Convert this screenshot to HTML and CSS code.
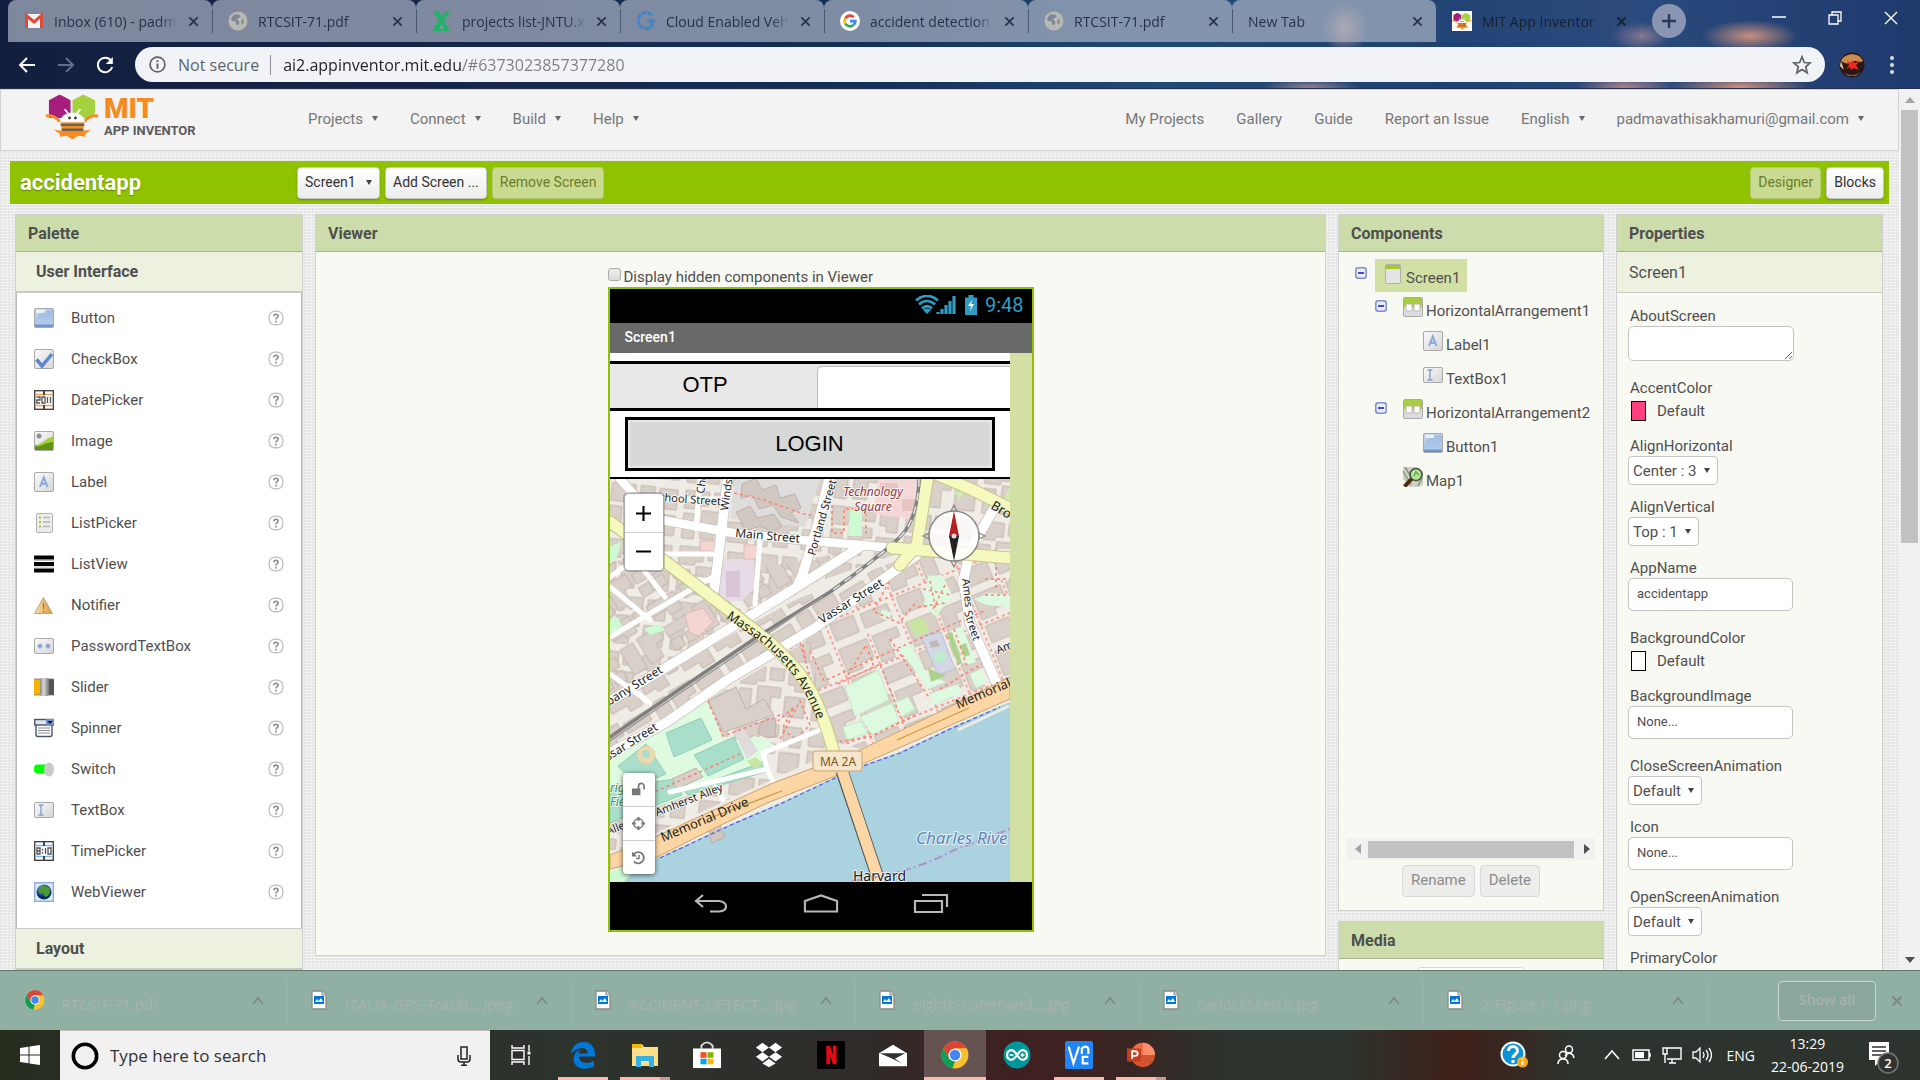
FILE: index.html
```html
<!DOCTYPE html>
<html lang="en">
<head>
<meta charset="utf-8">
<title>MIT App Inventor</title>
<link rel="stylesheet" href="styles.css">
</head>
<body>
<svg class="defs" aria-hidden="true">
  <defs>
    <linearGradient id="blue" x1="0" y1="0" x2="0" y2="1"><stop offset="0" stop-color="#9dbce2"/><stop offset="1" stop-color="#b3cdec"/></linearGradient>
    <linearGradient id="grey" x1="0" y1="0" x2="1" y2="1"><stop offset="0" stop-color="#fafafa"/><stop offset="1" stop-color="#d6d6d6"/></linearGradient>
    <linearGradient id="gold" x1="0" y1="0" x2="1" y2="0"><stop offset="0" stop-color="#fbe3b0"/><stop offset="1" stop-color="#d9963a"/></linearGradient>
    <linearGradient id="steel" x1="0" y1="0" x2="1" y2="0"><stop offset="0" stop-color="#888"/><stop offset=".4" stop-color="#d8d8d8"/><stop offset="1" stop-color="#777"/></linearGradient>
    <radialGradient id="globe" cx=".4" cy=".3"><stop offset="0" stop-color="#7fc4ff"/><stop offset="1" stop-color="#062a66"/></radialGradient>
  </defs>
  <symbol id="i-button" viewBox="0 0 20 20"><rect x=".5" y=".5" width="19" height="19" rx="1.5" fill="url(#blue)" stroke="#a9a9a9"/><path d="M1 16.500h18V19H1z" fill="#7293c8"/><path d="M1 12C3 6 8 3 19 2V1H1z" fill="#fff" opacity=".25"/><rect x="2" y="1.500" width="9" height="3.500" rx="1" fill="#fff" opacity=".7"/></symbol>
  <symbol id="i-check" viewBox="0 0 20 20"><rect x=".5" y=".5" width="19" height="19" rx="1.5" fill="url(#grey)" stroke="#a9a9a9"/><path d="M2.500 10.500 8 17 18 5" fill="none" stroke="#5b86cf" stroke-width="3.500"/></symbol>
  <symbol id="i-date" viewBox="0 0 20 20"><rect x=".7" y=".7" width="18.600" height="18.600" fill="#fff" stroke="#444" stroke-width="1.400"/><path d="M2 4.500h16M2 15.500h16" stroke="#f2a14a" stroke-width="1.300"/><path d="M10 1v4M10 15v4" stroke="#444" stroke-width="2"/><path d="M2.500 7h3.500v3H2.800v3H6M8 7h3v6H8zM13.500 7v6M16.500 7v6" fill="none" stroke="#555" stroke-width="1.300"/></symbol>
  <symbol id="i-image" viewBox="0 0 20 20"><rect x=".5" y=".5" width="19" height="19" rx="1.5" fill="url(#grey)" stroke="#a9a9a9"/><circle cx="5" cy="5" r="2.500" fill="#909090"/><path d="M1 14c8-1 10-6 18-9v14H1z" fill="#a5cf3b"/><path d="M1 15c8 1 10-4 18-4v8H1z" fill="#5f9410"/></symbol>
  <symbol id="i-label" viewBox="0 0 20 20"><rect x=".5" y=".5" width="19" height="19" rx="1.5" fill="url(#grey)" stroke="#a9a9a9"/><path d="M6 15 9.800 5.500 13.600 15M7.300 11.800h5" fill="none" stroke="#86a8dd" stroke-width="2"/></symbol>
  <symbol id="i-listp" viewBox="0 0 20 20"><rect x="2.500" y=".5" width="16" height="19" rx="1.500" fill="#ececea" stroke="#b4b4b4"/><path d="M5 4.500h2M5 9h2M5 13.500h2" stroke="#a4c43c" stroke-width="2.200"/><path d="M9 4.500h7M9 9h7M9 13.500h7" stroke="#b8b8b8" stroke-width="1.500"/></symbol>
  <symbol id="i-listv" viewBox="0 0 20 20"><path d="M0 3.500h20M0 10h20M0 16.500h20" stroke="#000" stroke-width="4"/><path d="M0 6.500h20M0 13h20" stroke="#bbb"/></symbol>
  <symbol id="i-notif" viewBox="0 0 20 20"><path d="M9.500 2.500 18.500 18.500H.5z" fill="url(#gold)" stroke="#b8a58a"/><path d="M9.500 8v6M9.500 15.500v2" stroke="#a77a35" stroke-width="1.200"/></symbol>
  <symbol id="i-pass" viewBox="0 0 20 20"><rect x=".5" y="2.500" width="19" height="15" rx="1.500" fill="url(#grey)" stroke="#a9a9a9"/><path d="M6 7.500v5M3.700 8.700l4.600 2.600M8.300 8.700l-4.600 2.600M14 7.500v5M11.700 8.700l4.600 2.600M16.300 8.700l-4.600 2.600" stroke="#7b9ddc" stroke-width="1.300"/></symbol>
  <symbol id="i-slider" viewBox="0 0 20 20"><path d="M0 2h6v16H0z" fill="#f4b400"/><path d="M14 2h6v16h-6z" fill="#555"/><path d="M0 2h20M0 18h20" stroke="#777" stroke-width=".8"/><rect x="6" y="1" width="9" height="18" rx="2" fill="url(#steel)"/></symbol>
  <symbol id="i-spin" viewBox="0 0 20 20"><rect x="2" y="6" width="16" height="12.500" rx="2" fill="#fff" stroke="#4c5564" stroke-width="1.400"/><rect x=".7" y="1.500" width="18.600" height="5.500" fill="#dfe4ec" stroke="#4c5564" stroke-width="1.400"/><path d="M12 1h8v6.500h-8z" fill="#6f8dd0"/><path d="M13.500 3h5L16 6z" fill="#111"/><path d="M4 10h12M4 12.500h12M4 15h12" stroke="#889" /></symbol>
  <symbol id="i-switch" viewBox="0 0 20 20"><rect y="5.500" width="16" height="9" rx="4" fill="#0f0"/><ellipse cx="15" cy="10.500" rx="5" ry="7" fill="#c9c9c9"/></symbol>
  <symbol id="i-text" viewBox="0 0 20 20"><rect x=".5" y="2.500" width="19" height="15" rx="1.500" fill="url(#grey)" stroke="#a9a9a9"/><path d="M4.500 5h5M4.500 15h5M7 5v10" stroke="#86a0cf" stroke-width="1.400"/></symbol>
  <symbol id="i-time" viewBox="0 0 20 20"><rect x=".7" y=".7" width="18.600" height="18.600" fill="#fff" stroke="#444" stroke-width="1.400"/><path d="M2 4.500h16M2 15.500h16" stroke="#7db7e8" stroke-width="1.300"/><path d="M10 1v4M10 15v4" stroke="#444" stroke-width="2"/><path d="M3 7h3v6H3zM3 10h3M8.500 8v1.500M8.500 11v1.500M11.500 7v6M14 7h3v6h-3z" fill="none" stroke="#555" stroke-width="1.300"/></symbol>
  <symbol id="i-web" viewBox="0 0 20 20"><rect x=".7" y=".7" width="18.600" height="18.600" fill="#dfe9f6" stroke="#8fb0dc" stroke-width="1.400"/><circle cx="10" cy="10" r="7.500" fill="url(#globe)"/><path d="M4 8c2-5 9-5 12-2 1 4 0 7-4 9-3-1-1-4-4-4s-3-1-4-3z" fill="#4a9a34"/></symbol>
  <symbol id="i-help" viewBox="0 0 16 16"><rect x="1.200" y="1.200" width="13.600" height="13.600" rx="5.500" fill="#fff" stroke="#c4c4c4" stroke-width="1.400"/><path d="M5.900 6.200c0-2.700 4.200-2.700 4.200 0 0 1.500-2.100 1.500-2.100 3.200M8 10.700v1.700" fill="none" stroke="#888" stroke-width="1.600"/></symbol>
  <symbol id="i-arr" viewBox="0 0 20 20"><rect x=".5" y=".5" width="19" height="19" rx="1.500" fill="#dcdcdc" stroke="#a9a9a9"/><path d="M1 1h18v9H1z" fill="#a8cc42"/><rect x="3" y="7" width="6" height="7" rx="1" fill="#fff" stroke="#b8b8b8"/><rect x="11" y="7" width="6" height="7" rx="1" fill="#fff" stroke="#b8b8b8"/></symbol>
  <symbol id="i-screen" viewBox="0 0 20 20"><rect x="2.500" y=".5" width="15" height="19" rx="1.500" fill="#e4e4e4" stroke="#b0b0b0"/><path d="M3 1h14v4H3z" fill="#a3c72f"/></symbol>
  <symbol id="i-map" viewBox="0 0 20 20"><path d="M0 0h14l6 6v12l-4 2H6L0 12z" fill="#c9d4c0"/><path d="M0 4 8 18M15 19l4-8M2 0l5 8" stroke="#8c9485" stroke-width="1.500"/><circle cx="13" cy="7.500" r="6" fill="#b7e39b" stroke="#4b4f45" stroke-width="1.700"/><path d="M11 9l2-4 3 3" stroke="#5eb04a" stroke-width="1.600" fill="none"/><path d="M8.500 12 1.500 19.500" stroke="#4d2b0b" stroke-width="4"/></symbol>
  <symbol id="i-minus" viewBox="0 0 12 12"><rect x=".8" y=".8" width="10.400" height="10.400" rx="2.500" fill="#e9ecf8" stroke="#7c8fce" stroke-width="1.500"/><path d="M3 6h6" stroke="#22b" stroke-width="1.600"/></symbol>
  <symbol id="i-chrome" viewBox="0 0 24 24"><circle cx="12" cy="12" r="11.500" fill="#fbc02d"/><path d="M2 6.200A11.500 11.500 0 0 1 22 6.300H12L7 15z" fill="#db4437"/><path d="M2 6.200 7.200 15 12 17.400l-2.100 6A11.500 11.500 0 0 1 2 6.200z" fill="#0f9d58"/><circle cx="12" cy="12" r="5.600" fill="#fff"/><circle cx="12" cy="12" r="4.500" fill="#4285f4"/></symbol>
  <symbol id="i-file" viewBox="0 0 16 20"><path d="M1 1h10l4 4v14H1z" fill="#fff" stroke="#8b8b8b" stroke-width="1.300"/><path d="M11 1v4h4" fill="#ddd" stroke="#8b8b8b"/><path d="M3 6h10v8H3z" fill="#0078d7"/><path d="m4 12 2-3 1.500 2L10 8l2 4z" fill="#fff"/></symbol>
  <symbol id="i-world" viewBox="0 0 20 20"><circle cx="10" cy="10" r="9.500" fill="#b9b9b3"/><path d="M8 3c-3 1-5 4-5 6 2 2 5 0 5 3 0 2 2 3 3 1 1-3-2-4-2-5 2-1 4-2 3-4-1-1-2 1-4-1z" fill="#7d8799"/><path d="M14 8c2 0 2 3 1 5l-2-1z" fill="#7d8799"/></symbol>
  <symbol id="i-x" viewBox="0 0 12 12"><path d="m1.500 1.500 9 9m0-9-9 9" fill="none" stroke="currentColor" stroke-width="1.800"/></symbol>
  <symbol id="i-up" viewBox="0 0 12 12"><path d="m1 9 5-6 5 6" fill="none" stroke="currentColor" stroke-width="1.800"/></symbol>
  <symbol id="i-bee" viewBox="0 0 56 46"><path d="M4 6 15 0l11 6v13l-9 5H4z" fill="#a71d7b"/><path d="M28 6 39 0l12 6v13l-6 5H28z" fill="#a4d23f"/><path d="M1 22c6-1 12 2 14 6M54 22c-6-1-12 2-14 6" stroke="#f68b1f" stroke-width="3" fill="none"/><path d="M16 28h24l-1 8H17z" fill="#f68b1f"/><path d="M18 37h20l9-1-6 4v3l-7-1-6 4-6-4-7 1v-3l-6-4z" fill="#f68b1f"/><path d="M16 31h24M17 36h22" stroke="#6b6152" stroke-width="2.500"/><path d="M16 28c0-12 24-12 24 0z" fill="#fff" stroke="#eee"/><path d="M24 20l-4-5M32 20l4-5" stroke="#fff" stroke-width="1.800"/><circle cx="25" cy="24" r="1.500" fill="#444"/><circle cx="31" cy="24" r="1.500" fill="#444"/></symbol>
</svg>

<header class="browser">
  <div class="tabs">
    <a class="tab" href="#"><svg viewBox="0 0 20 20"><path d="M1 3h18v14H1z" fill="#f4f4f4"/><path d="M2.500 17V4.500L10 11l7.500-6.500V17" fill="none" stroke="#dd4b39" stroke-width="3"/></svg><span>Inbox (610) - padm</span><svg class="x"><use href="#i-x"/></svg></a>
    <a class="tab" href="#"><svg><use href="#i-world"/></svg><span>RTCSIT-71.pdf</span><svg class="x"><use href="#i-x"/></svg></a>
    <a class="tab" href="#"><svg viewBox="0 0 20 20"><path d="M1 0h6l3 6 4-6h4l-6 10 6 10H2v-4l5-6z" fill="#1fb465"/><path d="m10 13-3 5h5z" fill="#8794ab"/></svg><span>projects list-JNTU.x</span><svg class="x"><use href="#i-x"/></svg></a>
    <a class="tab" href="#"><svg viewBox="0 0 20 20"><path d="M16 4A8 8 0 1 0 15 16l2-6h-6" fill="none" stroke="#3d86c6" stroke-width="3" stroke-dasharray="5 1"/></svg><span>Cloud Enabled Veh</span><svg class="x"><use href="#i-x"/></svg></a>
    <a class="tab" href="#"><svg viewBox="0 0 20 20"><circle cx="10" cy="10" r="10" fill="#fff"/><g fill="none" stroke-width="2.600"><path d="M13.800 6.200A5.400 5.400 0 0 0 5.300 7.300" stroke="#ea4335"/><path d="M5.300 7.300a5.400 5.400 0 0 0 0 5.400" stroke="#fbbc05"/><path d="M5.300 12.700a5.400 5.400 0 0 0 8.200 1.400" stroke="#34a853"/><path d="M13.500 14.100a5.400 5.400 0 0 0 1.900-4H10" stroke="#4285f4"/></g></svg><span>accident detection</span><svg class="x"><use href="#i-x"/></svg></a>
    <a class="tab" href="#"><svg><use href="#i-world"/></svg><span>RTCSIT-71.pdf</span><svg class="x"><use href="#i-x"/></svg></a>
    <a class="tab plain" href="#"><span>New Tab</span><svg class="x"><use href="#i-x"/></svg></a>
    <a class="tab on" href="#"><svg viewBox="0 0 56 50"><path d="M0-3h56v56H0z" fill="#fff"/><use href="#i-bee" width="56" height="46" y="2"/></svg><span>MIT App Inventor</span><svg class="x"><use href="#i-x"/></svg></a>
    <button class="newtab" aria-label="New tab"><svg viewBox="0 0 16 16"><path d="M8 1v14M1 8h14" stroke="#2c3950" stroke-width="2.400"/></svg></button>
    <div class="win">
      <svg viewBox="0 0 14 14"><path d="M0 6h14" stroke="#fff" stroke-width="1.500"/></svg>
      <svg viewBox="0 0 14 14"><path d="M1 4h9v9H1zM4 4V1h9v9h-3" fill="none" stroke="#fff" stroke-width="1.300"/></svg>
      <svg viewBox="0 0 14 14"><path d="m1 1 12 12M13 1 1 13" stroke="#fff" stroke-width="1.400"/></svg>
    </div>
  </div>
  <div class="toolbar">
    <button aria-label="Back"><svg viewBox="0 0 18 18"><path d="M17 9H2m7-7L2 9l7 7" fill="none" stroke="#fff" stroke-width="2"/></svg></button>
    <button aria-label="Forward"><svg viewBox="0 0 18 18"><path d="M1 9h15M9 2l7 7-7 7" fill="none" stroke="#62708f" stroke-width="2"/></svg></button>
    <button aria-label="Reload"><svg viewBox="0 0 18 18"><path d="M15 4.500A7.300 7.300 0 1 0 16.200 11" fill="none" stroke="#fff" stroke-width="2"/><path d="M16.800 1v7h-7z" fill="#fff"/></svg></button>
    <div class="url">
      <svg viewBox="0 0 16 16"><circle cx="8" cy="8" r="7" fill="none" stroke="#5f6368" stroke-width="1.600"/><path d="M8 7v5M8 4v1.700" stroke="#5f6368" stroke-width="1.800"/></svg>
      <label for="addr">Not secure</label>
      <input id="addr" type="text" value="ai2.appinventor.mit.edu/#6373023857377280">
      <svg viewBox="0 0 20 20" class="star"><path d="m10 1.800 2.300 5.700 6 .4-4.600 3.900 1.500 6L10 14.500l-5.200 3.300 1.500-6L1.700 7.900l6-.4z" fill="none" stroke="#5f6368" stroke-width="1.700"/></svg>
    </div>
    <svg class="avatar" viewBox="0 0 26 26"><circle cx="13" cy="13" r="12.500" fill="#2a1613"/><path d="M2 9C5 1 20-1 24 9c-4 3-6-2-11 1-4 2-7 2-11-1z" fill="#c98a4c"/><path d="M2 9l3 9-4-4z" fill="#e0cba8"/><path d="m8 9 4 2 1-3 3 3 5-2-4 4 3 5-5-2-3 2-1-3-4 2 3-4z" fill="#f0281c"/><path d="M5 20c5 4 11 4 16 0l-4 4h-8z" fill="#6f5a4c"/></svg>
    <svg class="dots" viewBox="0 0 4 18"><g fill="#ddd"><circle cx="2" cy="2" r="2"/><circle cx="2" cy="9" r="2"/><circle cx="2" cy="16" r="2"/></g></svg>
  </div>
</header>

<div class="page">
  <div class="app">
    <header class="top">
      <a class="logo" href="#"><svg viewBox="0 0 56 46"><use href="#i-bee"/></svg><span class="words"><b>MIT</b><span>APP INVENTOR</span></span></a>
      <nav class="menu"><a class="drop" href="#">Projects</a><a class="drop" href="#">Connect</a><a class="drop" href="#">Build</a><a class="drop" href="#">Help</a></nav>
      <nav class="menu end"><a href="#">My Projects</a><a href="#">Gallery</a><a href="#">Guide</a><a href="#">Report an Issue</a><a class="drop" href="#">English</a><a class="drop" href="#">padmavathisakhamuri@gmail.com</a></nav>
    </header>

    <div class="bar">
      <h1>accidentapp</h1>
      <span class="pick"><select aria-label="Screen"><option>Screen1</option></select></span>
      <button>Add Screen ...</button>
      <button class="dim" disabled>Remove Screen</button>
      <button class="dim right" disabled>Designer</button>
      <button>Blocks</button>
    </div>

    <main class="cols">
      <section class="panel palette">
        <h2>Palette</h2>
        <h3>User Interface</h3>
        <ul>
          <li><svg><use href="#i-button"/></svg><span>Button</span><svg class="help"><use href="#i-help"/></svg></li>
          <li><svg><use href="#i-check"/></svg><span>CheckBox</span><svg class="help"><use href="#i-help"/></svg></li>
          <li><svg><use href="#i-date"/></svg><span>DatePicker</span><svg class="help"><use href="#i-help"/></svg></li>
          <li><svg><use href="#i-image"/></svg><span>Image</span><svg class="help"><use href="#i-help"/></svg></li>
          <li><svg><use href="#i-label"/></svg><span>Label</span><svg class="help"><use href="#i-help"/></svg></li>
          <li><svg><use href="#i-listp"/></svg><span>ListPicker</span><svg class="help"><use href="#i-help"/></svg></li>
          <li><svg><use href="#i-listv"/></svg><span>ListView</span><svg class="help"><use href="#i-help"/></svg></li>
          <li><svg><use href="#i-notif"/></svg><span>Notifier</span><svg class="help"><use href="#i-help"/></svg></li>
          <li><svg><use href="#i-pass"/></svg><span>PasswordTextBox</span><svg class="help"><use href="#i-help"/></svg></li>
          <li><svg><use href="#i-slider"/></svg><span>Slider</span><svg class="help"><use href="#i-help"/></svg></li>
          <li><svg><use href="#i-spin"/></svg><span>Spinner</span><svg class="help"><use href="#i-help"/></svg></li>
          <li><svg><use href="#i-switch"/></svg><span>Switch</span><svg class="help"><use href="#i-help"/></svg></li>
          <li><svg><use href="#i-text"/></svg><span>TextBox</span><svg class="help"><use href="#i-help"/></svg></li>
          <li><svg><use href="#i-time"/></svg><span>TimePicker</span><svg class="help"><use href="#i-help"/></svg></li>
          <li><svg><use href="#i-web"/></svg><span>WebViewer</span><svg class="help"><use href="#i-help"/></svg></li>
        </ul>
        <h3>Layout</h3>
      </section>

      <section class="panel viewer">
        <h2>Viewer</h2>
        <div class="stage">
          <label class="hid"><input type="checkbox">Display hidden components in Viewer</label>
          <div class="phone">
            <div class="status">
              <svg class="wifi" viewBox="0 0 42 20"><g fill="none" stroke="#2f9cc4" stroke-width="2.800"><path d="M1 5.500c7-6 15-6 22 0M4 9.500c5-4.500 11-4.500 16 0M7 13.500c3-3 7-3 10 0"/></g><path d="m12 19-4-4c2-2 6-2 8 0z" fill="#2f9cc4"/><path d="M23 19v-2M27 19v-5M31 19v-9M35 19V6M39 19V1" stroke="#2f9cc4" stroke-width="3.200"/></svg>
              <svg class="batt" viewBox="0 0 14 20"><path d="M1 2.500h3.500V0h5v2.500H13V20H1z" fill="#2f9cc4"/><path d="m8 5-4 6h3l-1 5 4-7H7z" fill="#fff"/></svg>
              <span>9:48</span>
            </div>
            <div class="title">Screen1</div>
            <div class="body">
              <div class="canvas">
                <div class="otp"><label for="otp">OTP</label><input id="otp" type="text"></div>
                <div class="login"><button>LOGIN</button></div>
                <div class="map">
                  <svg class="tiles" viewBox="0 0 400 403" preserveAspectRatio="xMinYMin slice">
                    <defs>
                      <pattern id="blk" width="84" height="62" patternUnits="userSpaceOnUse" patternTransform="rotate(-31)"><path d="M3 3h26v18H16v-4H3zM33 3h12v9H33zM49 4h31v20H66v-7H49zM4 28h15v29H4zM24 27h24v14h-9v15H24zM53 31h27v11H53zM52 46h12v11H52zM68 46h12v11H68z" fill="#d9d0c9" stroke="#c3b7ad"/></pattern>
                      <pattern id="blk2" width="74" height="56" patternUnits="userSpaceOnUse" patternTransform="rotate(6)"><path d="M3 3h24v14h-8v4H3zM32 3h14v12H32zM51 4h18v20H58v-6h-7zM3 26h12v25H3zM21 22h23v10h-9v18H21zM49 30h20v20H49z" fill="#d9d0c9" stroke="#c3b7ad"/></pattern>
                      <pattern id="blk3" width="72" height="60" patternUnits="userSpaceOnUse" patternTransform="rotate(-22)"><path d="M4 4h30v20H20v6H4zM40 4h26v10H54v18H40zM5 37h25v18H5zM37 39h29v15H37z" fill="#d9d0c9" stroke="#c3b7ad"/><path d="M1 0v60M0 34h72M37 0v34" stroke="#fa8072" stroke-width="1.300" stroke-dasharray="3 3" fill="none"/></pattern>
                      <path id="mass" d="M116 139 150 162Q190 194 206 238L212 258"/>
                    </defs>
                    <path d="M0 0h400v403H0z" fill="#efebe5"/>
                    <path d="M0 0h330v60L187 110 0 222z" fill="url(#blk2)"/>
                    <path d="M0 80 105 98 250 70 187 112 0 230zM0 222 187 120 307 74 203 152 0 270z" fill="url(#blk)"/>
                    <path d="M307 74 400 79V200L250 270 215 260 195 160z" fill="url(#blk3)"/>
                    <path d="M330 0h70v70h-90zM0 280 200 160 218 275 0 375z" fill="url(#blk2)"/>
                    <path d="M125 0h85l-15 48-75-8z" fill="#dfdddb"/>
                    <path d="m132 5 14-6 6 12 14-5 4 13 15-4 6 14-10 5 8 10-18-6-8-12-14 4-6-14-12 3zM126 33l14-6 8 12 16-4 8 12-8 6-14-6-14 5z" fill="#d1c8c1" stroke="#bcb3ac"/>
                    <path d="M268 0h43l-12 40-35-5z" fill="#f4d8d8"/><path d="M270 4h18v10h-18zM292 20h14v12h-14z" fill="#e6c5c4"/>
                    <path d="M109 80h35v30l-12 12h-22z" fill="#e8dbe8"/><path d="M116 92h14v26h-14z" fill="#d8c6d6"/>
                    <path d="M90 62h20v10H90zM134 66h14v14h-14zM75 135l18-6 10 14-14 14-10-4z" fill="#f4d5d2" stroke="#deb8b5"/>
                    <path d="M240 31h12v26h-14zM0 68l12-6-6 18-6 5zM0 142l8-4 4 10-12 8zM34 150l14-5 8 6-16 5z" fill="#cdfad2"/>
                    <path d="m390 28 10-20v30zM302 56l6-6-4 14zM345 13l9 0-5 8z" fill="#cdeeb0"/>
                    <path d="m318 97 14-1 10 20-16 22-12-12zM364 120l16-6 20 2v12l-24-2zM272 130l10 4-4 8-8-4z" fill="#ddfae0"/>
                    <path d="M298 143l14-5 8 14-14 6z" fill="#c8e6a0"/>
                    <path d="m311 158 20-5 14 37-17 6z" fill="#d3d6e5" stroke="#bbbfd3"/><circle cx="330" cy="178" r="6" fill="#bfeccc"/><path d="m319 163 8-2 3 6-9 2z" fill="#c1b9b4"/>
                    <path d="m288 168 12-5 16 32 20 8-18 7zM340 152l12-5 14 36-10 3z" fill="#ddfae0"/><path d="m337 155 5-2 10 31-4 2zM350 166l6-2 4 12-6 2zM318 189l18 8-15 6z" fill="#aed18d"/>
                    <path d="m360 195 11-5 6 14-11 5zM320 215l28-10 4 8-30 14z" fill="#ddfae0"/>
                    <path d="m235 208 33-17 11 30-34 16zM250 238l32-14 7 18-27 14zM284 224l14-6 7 12-14 8zM233 248l18-6 6 12-20 7z" fill="#ddfae0" stroke="#c6e8c8"/>
                    <path d="m97 223 15 34 21 6 12-6 12 4 12 9-14 4-9 20-72 24-74 26v-74l42-15 35-25z" fill="#defbe1"/>
                    <path d="m56 254 35-15 11 22-38 17zM84 276l40-18 10 22-36 17zM8 287l28-22 20 30-30 12zM74 312l82-30 2 10-80 24zM0 310l64-10 8 16-72 28z" fill="#a9dfca" stroke="#93cdb5"/>
                    <circle cx="36" cy="276" r="9" fill="#ecd9b0" stroke="#dbc18c" stroke-dasharray="2 2"/><circle cx="36" cy="275" r="4" fill="#a9dfca"/>
                    <path d="m62 300 24-11 7 9-26 12zM98 222l28-14 10 22 18-10 10 16-50 17z" fill="#d9d0c9" stroke="#c0b4aa"/>
                    <path d="m124 254 10-4 14 22-11 8z" fill="#dedcdc"/><path d="M148 254q2-18 18-14l-1 18q-10 2-17-4z" fill="#d1c6bf" stroke="#bcb0a8"/>
                    <path d="m137 282 8-4 8 6-8 6z" fill="#c8e6a0"/>
                    <g fill="none" stroke="#fa8072" stroke-width="1.500" stroke-dasharray="3 3">
                      <path d="M124 14l30 7 40 14 12 2M222 26v28h12V30h22v28M98 222l15 35 60-22M170 260l20-38 10 24-14 14-14-10 12-22-16 14M190 164l30 100 40-6 46-22M228 205l42-20 30 78M200 172l14 30 90-40 70-30M280 160l40 60M285 92l-22 40 26 12 18-22M320 102l6 30M335 106l-12 24M313 110l28 6M308 128l28-4M344 150l14 40M238 196l18-30 8 22M180 170l12-8 4 20M375 100h25M375 116h25M386 70v40M40 315l90-40M330 210l50-30"/>
                    </g>
                    <g fill="none" stroke="#c9c3bd" stroke-linecap="round">
                      <path d="M10 0 46 40 123 54 190 61 250 66 282 69" stroke-width="10"/><path d="M118-4 112 48 104 112M220-4 207 48 193 94 187 108M0 222 80 174 187 108 250 68M0 274 57 243 117 201 203 150 307 76M353 100 360 144 386 203M353 104 360 71 385 28" stroke-width="11"/>
                    </g>
                    <g fill="none" stroke="#fff" stroke-linecap="round">
                      <path d="M10 0 46 40 123 54 190 61 250 66 282 69" stroke-width="8.500"/>
                      <path d="M118-4 112 48 104 112M220-4 207 48 193 94 187 108M0 222 80 174 187 108 250 68M0 274 57 243 117 201 203 150 307 76M353 100 360 144 386 203M353 104 360 71 385 28" stroke-width="9.500"/>
                      <path d="M150 61l-5 64M0 158l80-47 25-14M0 108l40 33M80 100l25 2M0 195l40 29M0 98l25-18 30 38M60 313l97-23-4-16 57-23M157 290l6 12M105 308l8 12M52 20h60M90 0l-4 50M55 75h50" stroke-width="5"/>
                    </g>
                    <g fill="none" stroke-linecap="round">
                      <path d="M0 43 57 84 120 132 157 161Q190 190 203 216T225 278M282 69l28 2 90 8M318-4 307 66 290 86M328-4 363 11l40 20" stroke="#c5c48a" stroke-width="13"/>
                      <path d="M309 0Q308 40 290 58T220 113L150 156 73 208 0 258" stroke="#808080" stroke-width="3.500"/>
                      <path d="M309 0Q308 40 290 58T220 113" stroke="#e8e8e8" stroke-width="1.500" stroke-dasharray="7 7"/>
                      <path d="M212 118l-62 42-77 52L0 262" stroke="#999" stroke-width="1.500"/>
                      <path d="M0 43 57 84 120 132 157 161Q190 190 203 216T225 278M282 69l28 2 90 8M318-4 307 66 290 86M328-4 363 11l40 20" stroke="#f6f9be" stroke-width="11"/>
                    </g>
                    <path d="m0 396 50-18 73-34 47-20 53-25 30-13 37-13 50-24 60-26v180H0z" fill="#abd3df"/>
                    <path d="M0 403v-10l12-4 10 6-8 8z" fill="#cdfad2"/><path d="m98 350 12-4 5 12-13 6z" fill="#d1c6c0" stroke="#bcb0aa"/><path d="m348 251 51-24" stroke="#efebe5" stroke-width="3"/>
                    <path d="m0 376 47-19 116-53 40-15 47-18 73-35 77-38v22l-77 34-66 29-34 15-66 26-50 24-60 30-47 12z" fill="#fcd6a4" stroke="#c9a26d"/>
                    <path d="m100 339 72-27M287 261l72-32" stroke="#c89b45" stroke-width="1.200"/>
                    <path d="m50 379 73-34 47-20 53-25 30-13 37-13 50-24 50-22" fill="none" stroke="#5555e0" stroke-width="1.200" stroke-dasharray="4 3"/>
                    <path d="m232 292 38 113" stroke="#555" stroke-width="13"/><path d="m231 288 39 117" stroke="#fcd6a4" stroke-width="11"/>
                    <path d="M242 402q60-8 100-30l58-22" fill="none" stroke="#b091cc" stroke-width="2" stroke-dasharray="9 3 2 3"/>
                    <rect x="203" y="272" width="49" height="20" rx="3" fill="#f7e5cb" stroke="#d8b98c" stroke-width="1.500"/>
                    <g class="names">
                      <text x="228" y="287" text-anchor="middle" class="shield">MA 2A</text>
                      <text transform="translate(49 22) rotate(4)">chool Street</text>
                      <text transform="translate(118 32) rotate(-82)">Winds</text>
                      <text transform="translate(94 15) rotate(-82)">Che</text>
                      <text transform="translate(125 58) rotate(5)" class="main">Main Street</text>
                      <text transform="translate(205 77) rotate(-74)">Portland Street</text>
                      <text transform="translate(212 145) rotate(-32)" class="main">Vassar Street</text>
                      <text transform="translate(352 100) rotate(83)">Ames</text>
                      <text transform="translate(354 133) rotate(72)">Street</text>
                      <text transform="translate(380 29) rotate(31)" class="big">Bro</text>
                      <text transform="translate(388 175) rotate(-22)">Am</text>
                      <text transform="translate(-1 227) rotate(-32)" class="main">bany Street</text>
                      <text transform="translate(-2 282) rotate(-32)" class="main">ssar Street</text>
                      <text transform="translate(47 337) rotate(-21)">Amherst Alley</text>
                      <text transform="translate(-2 356) rotate(-21)">Alley</text>
                      <text transform="translate(53 363) rotate(-23)" class="big">Memorial Drive</text>
                      <text transform="translate(348 230) rotate(-23)" class="big">Memorial</text>
                      <text class="big"><textPath href="#mass">Massachusetts Avenue</textPath></text>
                      <text x="263" y="17" text-anchor="middle" class="tech">Technology</text>
                      <text x="263" y="32" text-anchor="middle" class="tech">Square</text>
                      <text x="0" y="313" class="field">rig</text><text x="0" y="327" class="field">Fie</text>
                      <text x="306" y="365" class="river">Charles Rive</text>
                      <text x="243" y="402" class="harvard">Harvard</text>
                    </g>
                  </svg>
                  <div class="zoom"><button aria-label="Zoom in"><svg viewBox="0 0 18 18"><path d="M9 1v16M1 9h16" stroke="#000" stroke-width="2.200"/></svg></button><button aria-label="Zoom out"><svg viewBox="0 0 18 18"><path d="M1 9h16" stroke="#000" stroke-width="2.200"/></svg></button></div>
                  <svg class="compass" viewBox="0 0 66 66"><g fill="none" stroke="#888" stroke-width="1.200"><path d="m33 2 3 6h-6zM33 64l3-6h-6zM2 33l6 3v-6zM64 33l-6 3v-6z"/></g><circle cx="33" cy="33" r="25" fill="#fff" fill-opacity=".85" stroke="#888" stroke-width="1.500"/><path d="M33 8l5 25H28z" fill="#b52222"/><path d="M33 58l5-25H28z" fill="#222"/><circle cx="33" cy="33" r="2.500" fill="#ddd"/></svg>
                  <div class="tools">
                    <button aria-label="Lock"><svg viewBox="0 0 16 16"><path d="M1 7h9v7H1z" fill="#777"/><path d="M8 8V4.500a3 3 0 0 1 6 0V8" fill="none" stroke="#777" stroke-width="1.800"/></svg></button>
                    <button aria-label="Center"><svg viewBox="0 0 16 16"><circle cx="8" cy="8" r="5" fill="none" stroke="#777" stroke-width="1.600"/><path d="M8 1v4M8 11v4M1 8h4M11 8h4" stroke="#777" stroke-width="2.200"/></svg></button>
                    <button aria-label="Reset"><svg viewBox="0 0 16 16"><path d="M3 4.500a6 6 0 1 1 0 7.500" fill="none" stroke="#777" stroke-width="2"/><path d="M1 1.500V7h5.500z" fill="#777"/><path d="M8.500 5v4H5.500" fill="none" stroke="#777" stroke-width="1.500"/></svg></button>
                  </div>
                </div>
              </div>
            </div>
            <div class="keys">
              <svg viewBox="0 0 34 20"><path d="M9 2 2 8l7 6M2 8h23q7 1 7 5.500t-7 5H16" fill="none" stroke="#b8b8b8" stroke-width="2.200"/></svg>
              <svg viewBox="0 0 38 20"><path d="M2 19V8l17-6 17 6v11z" fill="none" stroke="#b8b8b8" stroke-width="2.200"/></svg>
              <svg viewBox="0 0 36 20"><path d="M2 8h27v11H2zM9 2h25v12" fill="none" stroke="#b8b8b8" stroke-width="2.200"/></svg>
            </div>
          </div>
        </div>
      </section>

      <div class="mid">
        <section class="panel comps">
          <h2>Components</h2>
          <ul class="tree">
            <li class="l0"><svg class="m"><use href="#i-minus"/></svg><span class="sel"><svg><use href="#i-screen"/></svg>Screen1</span></li>
            <li class="l1"><svg class="m"><use href="#i-minus"/></svg><span><svg><use href="#i-arr"/></svg>HorizontalArrangement1</span></li>
            <li class="l3"><span><svg><use href="#i-label"/></svg>Label1</span></li>
            <li class="l3"><span><svg><use href="#i-text"/></svg>TextBox1</span></li>
            <li class="l1"><svg class="m"><use href="#i-minus"/></svg><span><svg><use href="#i-arr"/></svg>HorizontalArrangement2</span></li>
            <li class="l3"><span><svg><use href="#i-button"/></svg>Button1</span></li>
            <li class="l2"><span><svg><use href="#i-map"/></svg>Map1</span></li>
          </ul>
          <div class="hbar"><i class="tri left"></i><i class="thumb"></i><i class="tri rightw"></i></div>
          <div class="acts"><button disabled>Rename</button><button disabled>Delete</button></div>
        </section>
        <section class="panel media">
          <h2>Media</h2>
          <div class="acts"><button>Upload File ...</button></div>
        </section>
      </div>

      <section class="panel props">
        <h2>Properties</h2>
        <p class="who">Screen1</p>
        <form>
          <div class="f"><label for="p1">AboutScreen</label><textarea id="p1"></textarea></div>
          <div class="f color"><span>AccentColor</span><button type="button"><i class="pink"></i>Default</button></div>
          <div class="f s"><label for="p2">AlignHorizontal</label><span class="pick"><select id="p2"><option>Center : 3</option></select></span></div>
          <div class="f s"><label for="p3">AlignVertical</label><span class="pick"><select id="p3"><option>Top : 1</option></select></span></div>
          <div class="f"><label for="p4">AppName</label><input id="p4" type="text" value="accidentapp"></div>
          <div class="f color"><span>BackgroundColor</span><button type="button"><i></i>Default</button></div>
          <div class="f"><label for="p5">BackgroundImage</label><input id="p5" type="text" value="None..."></div>
          <div class="f s"><label for="p6">CloseScreenAnimation</label><span class="pick"><select id="p6"><option>Default</option></select></span></div>
          <div class="f"><label for="p7">Icon</label><input id="p7" type="text" value="None..."></div>
          <div class="f s"><label for="p8">OpenScreenAnimation</label><span class="pick"><select id="p8"><option>Default</option></select></span></div>
          <div class="f color"><span>PrimaryColor</span></div>
        </form>
      </section>
    </main>
  </div>
  <div class="vbar"><i class="tri up"></i><i class="thumb"></i><i class="tri down"></i></div>
</div>

<div class="downloads">
  <div class="dl"><svg class="ch"><use href="#i-chrome"/></svg><span>RTCSIT-71.pdf</span><svg class="up"><use href="#i-up"/></svg></div>
  <div class="dl"><svg><use href="#i-file"/></svg><span>ITALIA-GPS-Tracki....jpeg</span><svg class="up"><use href="#i-up"/></svg></div>
  <div class="dl"><svg><use href="#i-file"/></svg><span>ACCIDENT-DETECT....jpg</span><svg class="up"><use href="#i-up"/></svg></div>
  <div class="dl"><svg><use href="#i-file"/></svg><span>eighth-command....jpg</span><svg class="up"><use href="#i-up"/></svg></div>
  <div class="dl"><svg><use href="#i-file"/></svg><span>carlockSketch.jpg</span><svg class="up"><use href="#i-up"/></svg></div>
  <div class="dl"><svg><use href="#i-file"/></svg><span>2-Figure1-1.png</span><svg class="up"><use href="#i-up"/></svg></div>
  <button class="all">Show all</button>
  <button class="shut" aria-label="Close"><svg><use href="#i-x"/></svg></button>
</div>

<footer class="task">
  <button class="start" aria-label="Start"><svg viewBox="0 0 20 20"><path d="M0 3 8.500 1.700v7.800H0zM9.500 1.500 20 0v9.500H9.500zM0 10.500h8.500v7.800L0 17zM9.500 10.500H20V20L9.500 18.500z" fill="#fff"/></svg></button>
  <div class="search">
    <svg class="ring" viewBox="0 0 28 28"><circle cx="14" cy="14" r="11.700" fill="none" stroke="#000" stroke-width="3.600"/></svg>
    <input type="text" aria-label="Search" placeholder="Type here to search">
    <svg class="mic" viewBox="0 0 14 20"><rect x="4" y="1" width="6" height="12" fill="none" stroke="#222" stroke-width="1.500"/><path d="M1 9v4q0 3 3 3h6q3 0 3-3V9M7 16v3M4 19.200h6" fill="none" stroke="#222" stroke-width="1.500"/></svg>
  </div>
  <nav class="apps">
    <a href="#" aria-label="Task view"><svg class="sm" viewBox="0 0 20 20"><path d="M1 5.500h12v9H1zM1 0v3h12V0M1 20v-3h12v3M18 0v6M18 11v9" fill="none" stroke="#fff" stroke-width="1.400"/><path d="M16.500 6.500h3v3h-3z" fill="#fff"/></svg></a>
    <a href="#" class="run" aria-label="Edge"><svg viewBox="0 0 28 28"><path d="M2 13C3 4 9 1 14.500 1 23 1 26.500 7.500 26 15.500H10c0 7 8.500 8 15 4.500V25.500C16 30 4 27.500 4.500 17 5 12 9 9 12 8c-2 1.500-2.500 3-2.500 4.500h9C19 5 8 5 2 13z" fill="#0078d7"/></svg></a>
    <a href="#" class="run multi" aria-label="Explorer"><svg viewBox="0 0 28 28"><path d="M1 3h10l2 3h14v19H1z" fill="#fce18a"/><path d="M1 3h10v4H1z" fill="#f5b700"/><path d="M5 15h18v11h-5v-6h-8v6H5z" fill="#37b0e8"/></svg></a>
    <a href="#" aria-label="Store"><svg viewBox="0 0 30 30"><path d="M0 8h30v21H0z" fill="#fff"/><path d="M9 9V5q6-7 12 0v4" fill="none" stroke="#ddd" stroke-width="2"/><path d="M8 12h6.500v6H8z" fill="#f25022"/><path d="M15.500 12H22v6h-6.500z" fill="#7fba00"/><path d="M8 19h6.500v6H8z" fill="#00a4ef"/><path d="M15.500 19H22v6h-6.500z" fill="#ffb900"/></svg></a>
    <a href="#" aria-label="Dropbox"><svg viewBox="0 0 30 28"><path d="m8 1 7 5-7 5-7-5zM22 1l7 5-7 5-7-5zM8 11l7 5-7 5-7-5zM22 11l7 5-7 5-7-5zM15 18l7 5-7 4-7-4z" fill="#fff"/></svg></a>
    <a href="#" aria-label="Netflix"><svg viewBox="0 0 30 30"><path d="M0 0h30v30H0z"/><path d="M10 5h4l3 10V5h4v20h-4l-3-9v9h-4z" fill="#e50914"/></svg></a>
    <a href="#" aria-label="Mail"><svg viewBox="0 0 30 28"><path d="M0 12 15 3l15 9v14H0z" fill="#fff"/><path d="M1 12h27L17 18l8 5-13-6z" fill="#2d332d"/></svg></a>
    <a href="#" class="run cur" aria-label="Chrome"><svg><use href="#i-chrome"/></svg></a>
    <a href="#" aria-label="Arduino"><svg viewBox="0 0 28 28"><circle cx="14" cy="14" r="13.500" fill="#00979c"/><path d="M14 14c-6-9-10-3-10 0s4 9 10 0 10-3 10 0-4 9-10 0z" fill="none" stroke="#fff" stroke-width="2.200"/><path d="M6.500 14h4M17.500 14h4M19.500 12v4" stroke="#fff" stroke-width="1.300"/></svg></a>
    <a href="#" class="run" aria-label="VNC"><svg viewBox="0 0 30 30"><rect width="30" height="30" rx="2" fill="#2185f4"/><path d="m4 6 5 18 6-18M18 14V8q4-4 7 0v6M25 17h-6v7h6" fill="none" stroke="#fff" stroke-width="2.300"/></svg></a>
    <a href="#" class="run multi" aria-label="PowerPoint"><svg viewBox="0 0 30 28"><circle cx="17" cy="14" r="13" fill="#d35230"/><path d="M17 1a13 13 0 0 1 13 13H17z" fill="#ff8f6b"/><path d="M17 1v13H4A13 13 0 0 1 17 1z" fill="#ed6c47"/><path d="M0 7h15v14H0z" fill="#c43e1c"/><path d="M5.500 18v-8h3q3 0 3 2.500T8.500 15h-3" fill="none" stroke="#fff" stroke-width="2"/></svg></a>
  </nav>
  <div class="tray">
    <svg class="w28" viewBox="0 0 28 28"><circle cx="13" cy="13" r="12.500" fill="#fff"/><circle cx="13" cy="13" r="10.500" fill="#0a93d6"/><path d="M8.500 10c0-6 9-6 9 0 0 3.500-4.500 3.500-4.500 7M13 19v3" fill="none" stroke="#fff" stroke-width="3"/><circle cx="22.500" cy="21" r="5.500" fill="#f7a81b"/><path d="M22.500 20v4M22.500 17.500v1.500" stroke="#fff" stroke-width="1.800"/></svg>
    <svg class="w20" viewBox="0 0 20 20"><g fill="none" stroke="#fff" stroke-width="1.500"><circle cx="13" cy="4.500" r="3.500"/><path d="M9 11q4-5 8-1l1 3"/><circle cx="7" cy="10" r="3.500"/><path d="M2 19q0-5 5-5t5 5"/></g></svg>
    <svg class="w16" viewBox="0 0 16 16"><path d="m1 12 7-8 7 8" fill="none" stroke="#fff" stroke-width="1.500"/></svg>
    <svg class="w20" viewBox="0 0 20 20"><path d="M1 5h16v10H1zM18 8v4" fill="none" stroke="#fff" stroke-width="1.500"/><path d="M3 7h9v6H3z" fill="#fff"/></svg>
    <svg class="w20" viewBox="0 0 20 20"><path d="M5 3h14v11H5M10 14v4M7 18h7" fill="none" stroke="#fff" stroke-width="1.400"/><path d="M1 3h4v6H1zM3 9v9" fill="none" stroke="#fff" stroke-width="1.400"/></svg>
    <svg class="w20" viewBox="0 0 20 20"><path d="M1 7h3l4-4v14l-4-4H1zM11 7q2 3 0 6M14 5q4 5 0 10M17 3q5 7 0 14" fill="none" stroke="#fff" stroke-width="1.300"/></svg>
    <span class="lang">ENG</span>
    <time>13:29<br>22-06-2019</time>
    <svg class="note" viewBox="0 0 32 34"><path d="M1 1h20v18h-8l-6 6v-6H1z" fill="#fff"/><path d="M4 6h14M4 10h14M4 14h10" stroke="#2d332d" stroke-width="1.300"/><circle cx="20" cy="22" r="10" fill="#30332f" stroke="#777" stroke-width="1.500"/><text x="20" y="27" text-anchor="middle">2</text></svg>
  </div>
</footer>
</body>
</html>
```
FILE: styles.css
```css
* { box-sizing: border-box; }
body { margin: 0; height: 100vh; display: flex; flex-direction: column; overflow: hidden; font-family: Roboto, "Liberation Sans", sans-serif; font-size: 15px; color: #4f4f4f; }
button, input, select, textarea { font: inherit; color: inherit; }
button { cursor: pointer; padding: 0; }
a { color: inherit; text-decoration: none; }
ul { list-style: none; margin: 0; padding: 0; }
h1, h2, h3, p { margin: 0; }
svg { display: block; flex: none; }
.defs { position: absolute; width: 0; height: 0; }

/* browser chrome */
.browser { flex: none; height: 89px; font-family: "Open Sans", sans-serif; border-bottom: 1px solid #26304a;
  background:
    radial-gradient(48px 16px at 1750px 36px, #c98f7e 0, transparent 100%),
    radial-gradient(30px 14px at 1640px 36px, #8d7a92 0, transparent 100%),
    radial-gradient(70px 12px at 1740px 87px, #cf8f7c 0, transparent 100%),
    radial-gradient(50px 12px at 1625px 87px, #a9808a 0, transparent 100%),
    radial-gradient(50px 8px at 1310px 87px, #8f7f90 0, transparent 100%),
    radial-gradient(24px 26px at 1345px 28px, #a98d94 0, transparent 100%),
    linear-gradient(90deg, #131f3f 0, #16244a 22%, #123059 45%, #1f4a78 60%, #1d4173 75%, #294a7c 86%, #1f396d 100%); }
.tabs { display: flex; height: 42px; padding-left: 8px; }
.tab { position: relative; flex: 0 1 204px; min-width: 0; display: flex; align-items: center; gap: 10px; padding: 0 13px 0 16px; background: rgba(172, 181, 196, .7); border-radius: 8px 8px 0 0; color: #26324a; font-size: 14px; }
.tab + .tab:not(.on)::before { content: ""; position: absolute; left: 0; top: 9px; width: 1px; height: 24px; background: #4b5872; }
.tab svg { width: 20px; height: 20px; }
.tab svg.x { width: 11px; height: 11px; }
.tab span { flex: 1; overflow: hidden; white-space: nowrap; -webkit-mask-image: linear-gradient(90deg, #000 85%, transparent); mask-image: linear-gradient(90deg, #000 85%, transparent); }
.tab.on { background: rgba(60, 80, 130, .2); color: #16202f; }
.newtab { align-self: center; width: 34px; height: 34px; margin-left: 12px; border: 0; border-radius: 50%; background: #8995b3; display: grid; place-items: center; }
.newtab svg { width: 16px; height: 16px; }
.win { margin-left: auto; display: flex; gap: 42px; align-items: center; padding-right: 22px; height: 36px; }
.win svg { width: 14px; height: 14px; }
.toolbar { display: flex; align-items: center; height: 45px; padding: 0 26px 0 18px; }
.toolbar button { width: 18px; height: 18px; margin-right: 21px; border: 0; background: none; }
.toolbar button svg { width: 18px; height: 18px; }
.url { flex: 1; height: 35px; margin-right: 14px; padding: 0 13px 0 14px; display: flex; align-items: center; gap: 12px; background: #f1f3f6; border-radius: 18px; font-size: 16px; color: #5f6368; }
.url svg { width: 17px; height: 17px; }
.url svg.star { width: 20px; height: 20px; }
.url label { padding-right: 11px; border-right: 1px solid #8d9196; line-height: 20px; }
.url input { flex: 1; min-width: 0; border: 0; padding: 0; outline: 0; color: #3c4043; background: linear-gradient(90deg, #202124 180px, #7a7e83 180px); -webkit-background-clip: text; background-clip: text; -webkit-text-fill-color: transparent; }
.avatar { width: 26px; height: 26px; margin-right: 25px; }
.dots { width: 4px; height: 18px; }

/* page */
.page { flex: 1; min-height: 0; display: flex; overflow: hidden; }
.app { flex: 1; min-width: 0; background-color: #e9e9e9; background-image: repeating-linear-gradient(0deg, rgba(255,255,255,.5) 0 1px, transparent 1px 3px), repeating-linear-gradient(90deg, rgba(0,0,0,.03) 0 1px, transparent 1px 4px); }
.top { display: flex; height: 62px; align-items: center; background: #f3f3f3; border: 1px solid #d2d2d2; color: #777; font-size: 15px; }
.logo { display: flex; gap: 4px; width: 307px; padding-left: 44px; margin-top: -6px; }
.logo > svg { width: 55px; height: 46px; }
.words { display: flex; flex-direction: column; font-weight: 700; font-size: 13px; line-height: 14px; color: #5b5b5d; }
.words b { font-size: 28px; line-height: 30px; color: #f68b1f; }
.menu { display: flex; gap: 32px; margin-top: -2px; }
.menu.end { margin-left: auto; margin-right: 34px; }
.drop::after, .pick::after { content: ""; display: inline-block; border: 3px solid transparent; border-top: 5px solid #666; border-bottom: 0; margin-left: 9px; vertical-align: 3px; }
.bar { display: flex; align-items: center; gap: 5px; height: 43px; margin: 10px; padding: 0 5px 0 10px; background: #8fc202; }
.bar h1 { width: 272px; color: #fff; font-size: 22px; font-weight: 700; text-shadow: 0 1px 1px #5d7e00; }
.bar button, .bar select { height: 32px; border: 1px solid #c8c8c8; border-radius: 4px; padding: 0 7px 2px; background: linear-gradient(#fff, #ececec); color: #333; font-size: 14px; box-shadow: 0 1px 2px rgba(0,0,0,.25); }
.bar .dim { background: #c8db90; border-color: #b5cb72; color: #6c7c2d; box-shadow: none; }
.bar .right { margin-left: auto; }
.pick { position: relative; display: inline-block; }
.pick select { appearance: none; outline: 0; }
.bar .pick select { padding-right: 23px; }
.pick::after { position: absolute; right: 8px; top: 13px; pointer-events: none; border-top-color: #444; }

.cols { display: flex; gap: 12px; padding: 0 16px 0 15px; align-items: flex-start; }
.panel { background: #f8f9f2; border: 1px solid #d0d0d0; }
.panel h2 { height: 37px; padding-left: 12px; background: #ccdcaa; border-bottom: 1px solid #aab292; font-size: 16px; line-height: 37px; font-weight: 700; }
.palette { flex: none; width: 288px; }
.palette h3 { height: 41px; padding-left: 20px; font-size: 16px; line-height: 40px; background: #edf1df; border-bottom: 2px solid #c9ccc2; font-weight: 700; }
.palette ul { background: #fff; border: 1px solid #bbb; border-top: 0; border-bottom-color: #ccc; padding: 4px 17px 16px 17px; }
.palette li { display: flex; align-items: center; height: 41px; gap: 17px; }
.palette li svg { width: 20px; height: 20px; }
.palette li svg.help { width: 16px; height: 16px; margin-left: auto; }

.viewer { flex: 1; height: 742px; }
.stage { display: flex; flex-direction: column; align-items: center; padding-top: 15px; }
.hid { width: 426px; height: 20px; display: flex; align-items: center; line-height: 20px; }
.hid input { margin: 0 3px 5px 0; width: 13px; height: 13px; appearance: none; border: 1px solid #aaa; border-radius: 3px; background: linear-gradient(#eee, #ddd); }
.phone { width: 426px; border: 2px solid #8fc202; background: #000; }
.status { display: flex; justify-content: flex-end; align-items: center; height: 34px; padding-right: 8px; font-size: 20px; line-height: 30px; padding-bottom: 2px; color: #2f9cc4; }
.wifi { width: 42px; height: 20px; margin-right: 7px; }
.batt { width: 14px; height: 20px; margin-right: 7px; }
.title { height: 30px; padding-left: 15px; background: #696969; color: #fff; font-size: 14px; line-height: 28px; font-weight: 500; }
.body { background: #d2e0a6; }
.canvas { width: 400px; background: #fff; padding-top: 8px; }
.otp { display: flex; height: 50px; border: solid #000; border-width: 3px 0; background: #e8e8e8; font: 22px/42px "Liberation Sans", Arial, sans-serif; color: #000; }
.otp label { width: 207px; padding-right: 16px; text-align: center; }
.otp input { flex: 1; min-width: 0; margin-top: 2px; border: solid #bbb; border-width: 1px 0 0 1px; border-radius: 5px 0 0 0; background: #fff; }
.login { padding: 6px 15px; border-bottom: 2px solid #000; }
.login button { display: block; width: 100%; height: 54px; border: 3px solid #000; background: #d6d8d7; box-shadow: inset 0 0 2px 2px #e6e8e7; font: 22px "Liberation Sans", Arial, sans-serif; color: #000; }
.map { position: relative; height: 403px; overflow: hidden; }
.tiles { width: 100%; height: 100%; }
.names { font: 11px "Noto Sans", sans-serif; fill: #222; stroke: #fff; stroke-width: 2px; stroke-opacity: .7; paint-order: stroke; }
.names .main { font-size: 12px; }
.names .big { font-size: 13px; stroke-opacity: 0; }
.names .shield { font-size: 12px; fill: #77581f; stroke: none; }
.names .tech { font-size: 12px; font-style: italic; fill: #8c3c46; }
.names .field { font-size: 12px; font-style: italic; fill: #2f9068; }
.names .river { font-size: 17px; font-style: italic; fill: #5b86b8; }
.names .harvard { font-size: 14px; }
.zoom { position: absolute; left: 14px; top: 14px; width: 40px; border: 1px solid #aaa; border-radius: 5px; background: #fff; overflow: hidden; box-shadow: 0 0 0 1px rgba(0,0,0,.2); }
.zoom button { display: grid; place-items: center; width: 100%; height: 38px; border: 0; background: #fff; }
.zoom button + button, .tools button + button { border-top: 1px solid #ccc; }
.zoom svg { width: 17px; height: 17px; }
.compass { position: absolute; left: 311px; top: 24px; width: 66px; height: 66px; }
.tools { position: absolute; left: 13px; top: 294px; width: 32px; border-radius: 4px; background: #fff; overflow: hidden; box-shadow: 0 1px 5px rgba(0,0,0,.65); }
.tools button { display: grid; place-items: center; width: 100%; height: 34px; border: 0; background: #fff; }
.tools button:first-child { height: 33px; }
.tools svg { width: 15px; height: 15px; }
.keys { display: flex; justify-content: space-between; align-items: center; height: 48px; padding: 0 83px 6px; }
.keys svg { height: 20px; width: 36px; }

.mid { flex: none; width: 266px; display: flex; flex-direction: column; gap: 10px; }
.tree { height: 586px; padding: 7px 0 0 16px; overflow: hidden; white-space: nowrap; }
.tree li { display: flex; align-items: center; height: 34px; }
.tree .l0 { height: 33px; }
.tree .m { width: 12px; height: 12px; margin: 0 8px 6px 0; }
.tree span { display: flex; align-items: center; gap: 3px; height: 33px; padding-top: 4px; }
.tree span svg { width: 20px; height: 20px; margin-bottom: 8px; }
.tree .sel { background: #d2e0a6; padding: 5px 7px 0 8px; }
.l1 { padding-left: 20px; }
.l1 span { margin-left: 8px; }
.l2 { padding-left: 48px; }
.l3 { padding-left: 68px; }
.tri { width: 0; height: 0; border: 5px solid transparent; }
.hbar { display: flex; align-items: center; height: 22px; margin: 0 8px; background: #f1f1f1; }
.hbar .thumb { flex: 1; height: 17px; margin: 0 7px; background: #c1c1c1; }
.hbar .left { border-right: 6px solid #a3a3a3; border-left: 3px solid transparent; margin-left: 5px; }
.hbar .rightw { border-left: 6px solid #505050; margin-left: 3px; }
.acts { display: flex; justify-content: center; gap: 5px; padding: 5px 0 13px; }
.acts button { height: 32px; padding: 0 8px 2px; border: 1px solid #d8d8d8; border-radius: 4px; background: #ededeb; color: #8c8c8c; }
.media .acts { padding-top: 8px; }
.media .acts button { background: #fff; color: #444; }

.props { flex: none; width: 267px; }
.who { height: 41px; padding-left: 12px; line-height: 41px; font-size: 16px; background: #edf1df; border-bottom: 1px solid #c9ccc2; }
.props form { padding: 13px 11px 0; }
.f { display: flex; flex-direction: column; align-items: flex-start; margin-bottom: 17px; }
.f > label, .f > span:first-child { padding-left: 2px; line-height: 20px; }
.f textarea { width: 166px; height: 35px; border: 1px solid #c4c4c4; border-radius: 5px; background: #fff; }
.f input { width: 165px; height: 33px; padding: 0 8px 3px; border: 1px solid #c4c4c4; border-radius: 5px; background: #fff; font-size: 13px; }
.f.s { margin-bottom: 12px; }
.f select { height: 29px; padding: 0 20px 0 4px; border: 1px solid #c4c4c4; border-radius: 4px; background: #fff; font-size: 15px; }
.f .pick::after { top: 12px; right: 8px; }
.f.color { margin-bottom: 15px; }
.f.color button { display: flex; align-items: center; gap: 11px; height: 20px; margin: 3px 0 0 3px; border: 0; background: none; }
.f.color i { width: 15px; height: 20px; border: 1px solid #000; background: #fff; }
.f.color .pink { background: #ff4081; }

.vbar { flex: none; width: 21px; display: flex; flex-direction: column; align-items: center; background: #f1f1f1; }
.vbar .thumb { width: 17px; height: 433px; margin-top: 7px; background: #c1c1c1; }
.vbar .up { border-bottom: 6px solid #a3a3a3; border-top: 0; margin-top: 8px; }
.vbar .down { border-top: 6px solid #505050; border-bottom: 0; margin: auto 0 7px; }

/* downloads */
.downloads { flex: none; display: flex; align-items: center; height: 60px; background: #8fb0a3; border-top: 1px solid #5f776d; font-family: "Open Sans", sans-serif; font-size: 15px; color: #a9b2ad; padding-left: 4px; }
.dl { flex: 0 1 284px; min-width: 0; height: 44px; display: flex; align-items: center; padding: 0 23px 0 21px; border-right: 1px solid #9cb5ab; gap: 16px; }
.dl svg { width: 16px; height: 20px; margin: 0 2px 2px; }
.dl svg.ch { width: 20px; height: 20px; margin: 0 0 2px; }
.dl span { flex: 1; white-space: nowrap; padding-top: 6px; }
.dl svg.up { width: 12px; height: 12px; margin: 0; color: #7d8a85; }
.all { flex: none; width: 98px; height: 40px; margin-left: auto; border: 1px solid #ccd6d1; border-radius: 4px; background: #89a79b; font-weight: 600; font-size: 14px; padding-bottom: 2px; }
.shut { width: 12px; height: 12px; margin: 0 17px 0 15px; border: 0; background: none; color: #7d8a85; }
.shut svg { width: 12px; height: 12px; }

/* taskbar */
.task { flex: none; display: flex; height: 50px; background: linear-gradient(90deg, #262c1e, #2d332d 30%, #2f2c29 45%, #3f2020 53%, #3a2422 58%, #2d332d 64%, #2d332d 70%, #3f2019 76%, #2d332d 82%); color: #fff; font-family: "Open Sans", sans-serif; }
.start { width: 60px; border: 0; background: none; display: grid; place-items: center; }
.start svg { width: 20px; height: 20px; }
.search { width: 430px; display: flex; align-items: center; padding: 0 19px 0 11px; gap: 11px; background: #f1f1f1; color: #222; border-top: 1px solid #c9b9b9; }
.ring { width: 28px; height: 28px; }
.mic { width: 14px; height: 20px; }
.search input { flex: 1; min-width: 0; border: 0; background: none; padding: 0; font-size: 17px; outline: 0; }
.search input::placeholder { color: #333; opacity: 1; }
.apps { display: flex; }
.apps a { position: relative; width: 62px; display: grid; place-items: center; }
.apps svg { width: 28px; height: 28px; }
.apps svg.sm { width: 20px; height: 20px; }
.run::after { content: ""; position: absolute; left: 6px; right: 6px; bottom: 0; height: 3px; background: #ffb8ae; }
.run.multi::after { border-right: 10px solid #c89790; }
.cur { background: #655352; }
.cur::after { left: 0; right: 0; }
.tray { margin-left: auto; display: flex; align-items: center; padding-right: 20px; }
.w28 { width: 28px; height: 28px; margin-right: 28px; }
.w20 { width: 20px; height: 20px; margin-right: 10px; }
.w16 { width: 16px; height: 16px; margin: 0 12px 0 18px; }
.lang { font-size: 14px; margin: 0 16px 0 4px; }
.tray time { font-size: 14px; line-height: 23px; text-align: center; margin-right: 24px; }
.note { width: 32px; height: 34px; margin-top: 6px; }
.note text { font: 600 13px "Open Sans", sans-serif; fill: #fff; }
```
